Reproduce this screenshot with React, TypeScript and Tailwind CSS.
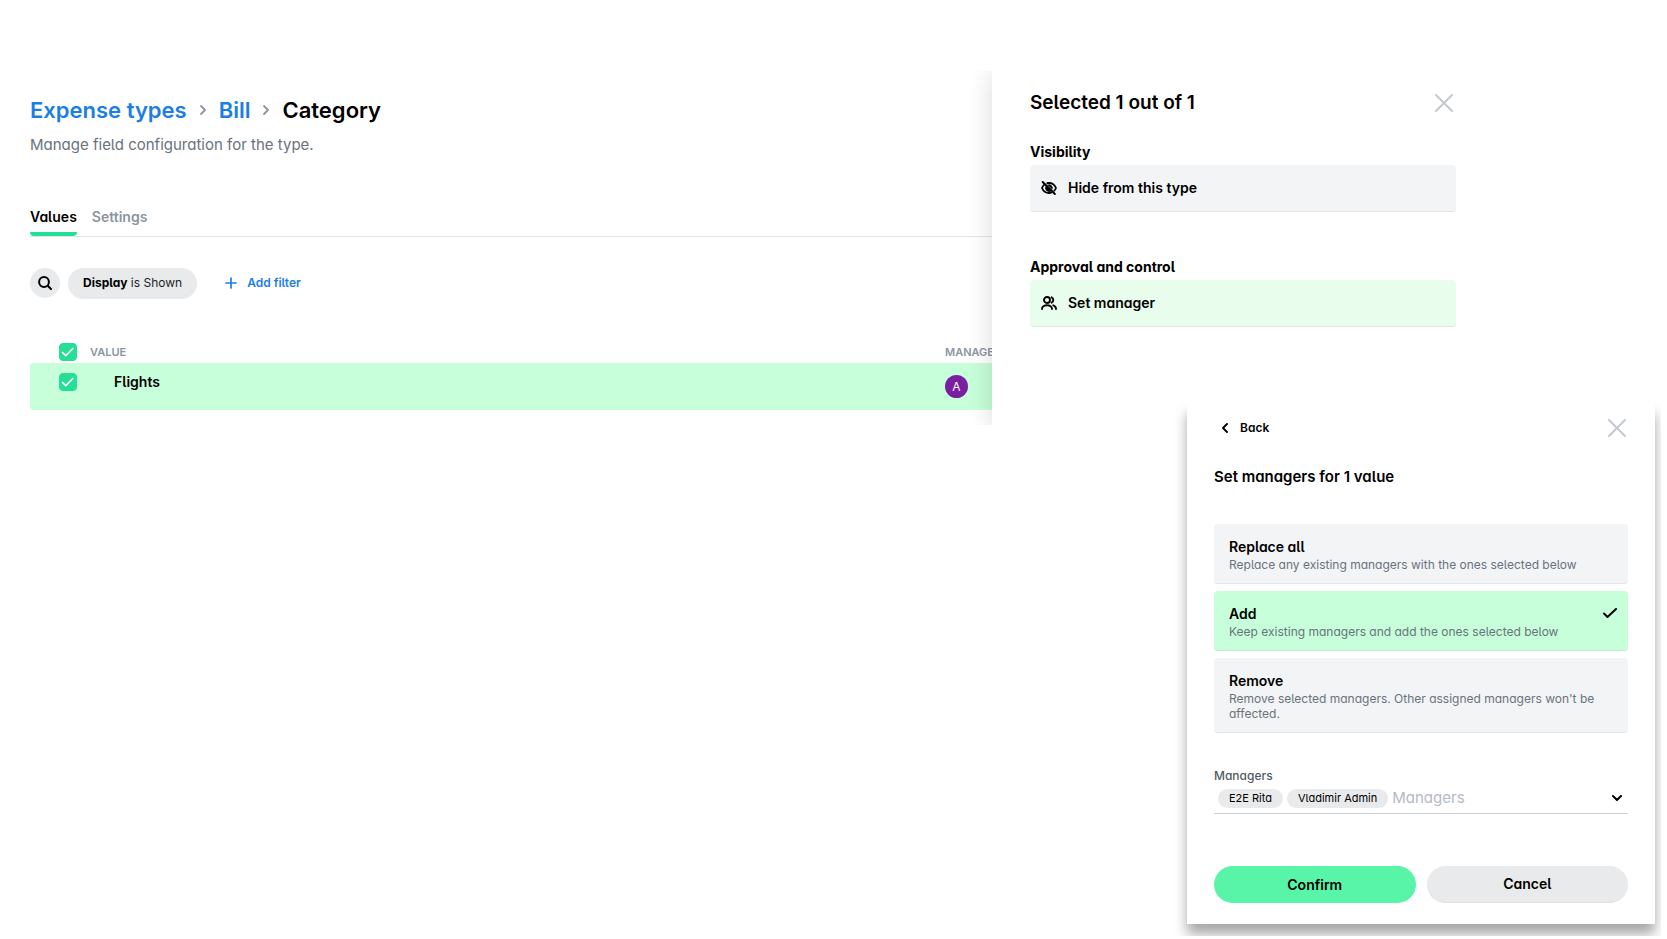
import React, { useState } from 'react';

const font = "font-['Inter',sans-serif] [font-feature-settings:'cv11'_1,'cv05'_1] text-black";

function CloseIcon() {
  return (
    <svg viewBox="0 0 18 18" className="size-[18px]" fill="none" stroke="#c3c8d0" strokeWidth="1.9" strokeLinecap="round">
      <path d="M1 1l16 16M17 1L1 17" />
    </svg>
  );
}

function Separator() {
  return (
    <svg viewBox="0 0 8 12" className="h-3 w-2" fill="none" stroke="#8b95a1" strokeWidth="1.8" strokeLinecap="round" strokeLinejoin="round" aria-hidden="true">
      <path d="M2 2l4 4-4 4" />
    </svg>
  );
}

function HideIcon() {
  return (
    <svg viewBox="0 0 16 14" className="h-[14px] w-4" fill="none" stroke="#000" strokeWidth="1.8" strokeLinecap="round" strokeLinejoin="round" aria-hidden="true">
      <path d="M1.7 1l12.2 12" strokeWidth="1.9" />
      <path d="M3 3.8C2.100 4.700 1.400 5.800 1 7c1.200 3 3.800 5 7 5 .9 0 1.700-.2 2.500-.5" />
      <path d="M6.200 2.200C6.800 2.100 7.400 2 8 2c3.200 0 5.800 2 7 5-.4 1-1 1.900-1.700 2.700" />
      <path d="M5.100 5.200L10 10A3.500 3.500 0 0 1 5.100 5.200zM7 3.900A3.300 3.300 0 0 1 11.200 8z" fill="#000" stroke="#000" strokeWidth="0.8" />
    </svg>
  );
}

function PeopleIcon() {
  return (
    <svg viewBox="0 0 16 14" className="h-[14px] w-4" fill="none" stroke="#000" strokeWidth="1.9" strokeLinecap="round" strokeLinejoin="round" aria-hidden="true">
      <circle cx="6" cy="4" r="3" />
      <path d="M1 13c0-2.200 2.200-3.700 5-3.700s5 1.500 5 3.700" />
      <path d="M10.600 1.300a3 3 0 0 1 0 5.400M12.300 9.300c1.600.5 2.700 1.800 2.700 3.700" />
    </svg>
  );
}

function CheckBox({ label }: { label: string }) {
  const [on, setOn] = useState(true);
  return (
    <label className="grid size-[18px] shrink-0">
      <input
        type="checkbox"
        aria-label={label}
        checked={on}
        onChange={() => setOn(!on)}
        className="col-start-1 row-start-1 size-[18px] appearance-none rounded border border-[#25df96] bg-white checked:bg-[#25df96]"
      />
      {on && (
        <svg viewBox="0 0 18 18" className="pointer-events-none col-start-1 row-start-1 size-[18px]" fill="none" stroke="#fff" strokeWidth="1.7" strokeLinecap="round" strokeLinejoin="round">
          <path d="M3.500 9.500l3.300 3.200 7-7.200" />
        </svg>
      )}
    </label>
  );
}

function Main() {
  return (
    <main className="h-[355px] min-w-0 flex-1 overflow-hidden pt-6 pl-[30px]">
      <h1 className="flex h-8 items-center text-[22px] font-semibold [font-feature-settings:normal]">
        <a href="#types" className="text-[#1b7ee6]">Expense types</a>
        <span className="px-3"><Separator /></span>
        <a href="#bill" className="text-[#1b7ee6]">Bill</a>
        <span className="px-3"><Separator /></span>
        <span>Category</span>
      </h1>
      <p className="mt-[7px] text-[15px] leading-6 text-[#69737d]">Manage field configuration for the type.</p>
      <nav className="mt-12 flex h-8 gap-[15px] border-b border-[#e1e5e7] text-sm leading-6 font-semibold">
        <a href="#values" className="h-[31px] rounded-b-sm border-b-4 border-[#25df96]">Values</a>
        <a href="#settings" className="text-[#8b95a1]">Settings</a>
      </nav>
      <div className="mt-[30px] flex h-8 items-center text-xs">
        <button aria-label="Search" className="flex size-[30px] items-center justify-center rounded-full bg-[#e8eaeb]">
          <svg viewBox="0 0 14 14" className="size-[14px]" fill="none" stroke="#000" strokeWidth="2" strokeLinecap="round">
            <circle cx="6" cy="6" r="4.900" />
            <path d="M9.800 9.800l3.200 3.200" />
          </svg>
        </button>
        <button className="ml-2 h-[31px] rounded-full bg-[#e8eaeb] px-[15px] text-[#1c1f22]">
          <span className="font-bold text-black">Display</span> is Shown
        </button>
        <button className="ml-7 flex items-center gap-2.5 font-semibold text-[#1b7ee6]">
          <svg viewBox="0 0 12 12" className="size-3" fill="none" stroke="currentColor" strokeWidth="1.700" strokeLinecap="round">
            <path d="M6 1v10M1 6h10" />
          </svg>
          Add filter
        </button>
      </div>
      <table className="mt-[41px] w-full table-fixed border-collapse text-left">
        <thead>
          <tr className="h-[23px] text-[11px] text-[#8b95a1]">
            <th className="w-[60px] pl-[29px] align-middle"><CheckBox label="Select all" /></th>
            <th className="pt-[2px] font-semibold">VALUE</th>
            <th className="w-[47px] pt-[2px] font-semibold whitespace-nowrap">MANAGERS</th>
          </tr>
        </thead>
        <tbody>
          <tr className="h-[47px] bg-[#c6ffd9]">
            <td className="rounded-l pt-[10px] pl-[29px] align-top"><CheckBox label="Select Flights" /></td>
            <td className="pt-[9px] pl-6 align-top text-sm leading-5 font-semibold">Flights</td>
            <td className="align-middle">
              <span className="flex size-[23px] items-center justify-center rounded-full bg-[#7b1fa2] text-xs text-white">A</span>
            </td>
          </tr>
        </tbody>
      </table>
    </main>
  );
}

function SelectionPanel() {
  return (
    <aside className="h-[355px] w-[675px] shrink-0 bg-white pt-[17px] pr-[211px] pl-[38px]">
      <header className="flex h-8 items-center justify-between pr-[3px]">
        <h2 className="text-[19px] font-semibold">Selected 1 out of 1</h2>
        <button aria-label="Close selection"><CloseIcon /></button>
      </header>
      <h3 className="mt-[23px] text-sm leading-5 font-bold">Visibility</h3>
      <button className="mt-[3px] flex h-[47px] w-full items-center gap-[11px] rounded border-b border-[#e3e5e8] bg-[#f3f4f6] px-[11px] text-sm font-semibold">
        <HideIcon />Hide from this type
      </button>
      <h3 className="mt-[45px] text-sm leading-5 font-bold">Approval and control</h3>
      <button className="mt-[3px] flex h-[47px] w-full items-center gap-[11px] rounded border-b border-[#d9eadf] bg-[#e8fdec] px-[11px] text-sm font-semibold">
        <PeopleIcon />Set manager
      </button>
    </aside>
  );
}

const options = [
  { title: 'Replace all', text: 'Replace any existing managers with the ones selected below' },
  { title: 'Add', text: 'Keep existing managers and add the ones selected below' },
  { title: 'Remove', text: "Remove selected managers. Other assigned managers won't be affected." },
];

function ManagersDialog() {
  const [chosen, setChosen] = useState('Add');
  return (
    <section className="w-[468px] bg-white px-[27px] pt-2 pb-[21px]">
      <header className="flex h-8 items-center justify-between pr-[2px] pl-2">
        <button className="flex items-center gap-3 text-xs font-semibold">
          <svg viewBox="0 0 6 10" className="h-[10px] w-[6px]" fill="none" stroke="#000" strokeWidth="1.900" strokeLinecap="round" strokeLinejoin="round">
            <path d="M5 1L1 5l4 4" />
          </svg>
          Back
        </button>
        <button aria-label="Close dialog"><CloseIcon /></button>
      </header>
      <h2 className="mt-[21px] text-[15px] leading-6 font-semibold">Set managers for 1 value</h2>
      <div className="mt-[35px] flex flex-col gap-[7px]">
        {options.map((o) => (
          <button
            key={o.title}
            onClick={() => setChosen(o.title)}
            className={
              'flex items-start justify-between rounded border-b pt-[13px] pr-[11px] pb-[11px] pl-[15px] text-left ' +
              (o.title === chosen ? 'border-[#bfeccd] bg-[#c6ffd9]' : 'border-[#e3e5e8] bg-[#f3f4f6]')
            }
          >
            <span>
              <span className="block text-sm leading-5 font-semibold">{o.title}</span>
              <span className="block text-xs leading-[15px] text-[#69737d]">{o.text}</span>
            </span>
            {o.title === chosen && (
              <svg viewBox="0 0 14 10" className="mt-1 h-[10px] w-[14px] shrink-0" fill="none" stroke="#000" strokeWidth="2" strokeLinecap="round" strokeLinejoin="round">
                <path d="M1 5.500L4.500 9 13 1" />
              </svg>
            )}
          </button>
        ))}
      </div>
      <label htmlFor="managers" className="mt-[35px] block text-xs leading-4 font-medium text-[#525b64]">Managers</label>
      <div className="mt-[3px] flex h-[27px] items-center gap-1 border-b border-[#cfd3d7] pr-[5px] pb-1 pl-1">
        <span className="rounded-full bg-[#e8eaeb] px-[11px] text-[11px] leading-[19px]">E2E Rita</span>
        <span className="rounded-full bg-[#e8eaeb] px-[11px] text-[11px] leading-[19px]">Vladimir Admin</span>
        <input id="managers" placeholder="Managers" className="min-w-0 flex-1 bg-transparent text-[15px] outline-none placeholder:text-[#b3bac5]" />
        <button aria-label="Show managers">
          <svg viewBox="0 0 12 8" className="h-2 w-3" fill="none" stroke="#000" strokeWidth="2" strokeLinecap="round" strokeLinejoin="round">
            <path d="M2 2l4 4 4-4" />
          </svg>
        </button>
      </div>
      <footer className="mt-[52px] grid grid-cols-2 gap-[11px] text-sm font-semibold">
        <button className="h-[37px] rounded-full bg-[#58f4a7]">Confirm</button>
        <button className="h-[37px] rounded-full border-b border-[#dfe1e2] bg-[#e8eaeb]">Cancel</button>
      </footer>
    </section>
  );
}

export default function App() {
  return (
    <div className={`${font} bg-white pt-[70px]`}>
      <div className="flex">
        <Main />
        <div className="z-10 -ml-6 shrink-0 overflow-hidden pl-6">
          <div className="shadow-[0_4px_24px_rgba(0,0,0,0.15)]"><SelectionPanel /></div>
        </div>
      </div>
      <div className="relative z-20 -mt-[21px] flex justify-end pr-1.5">
        <div className="overflow-hidden pr-1.5 pb-3 pl-4">
          <div className="shadow-[0_10px_12px_rgba(0,0,0,0.35)]"><ManagersDialog /></div>
        </div>
      </div>
    </div>
  );
}
